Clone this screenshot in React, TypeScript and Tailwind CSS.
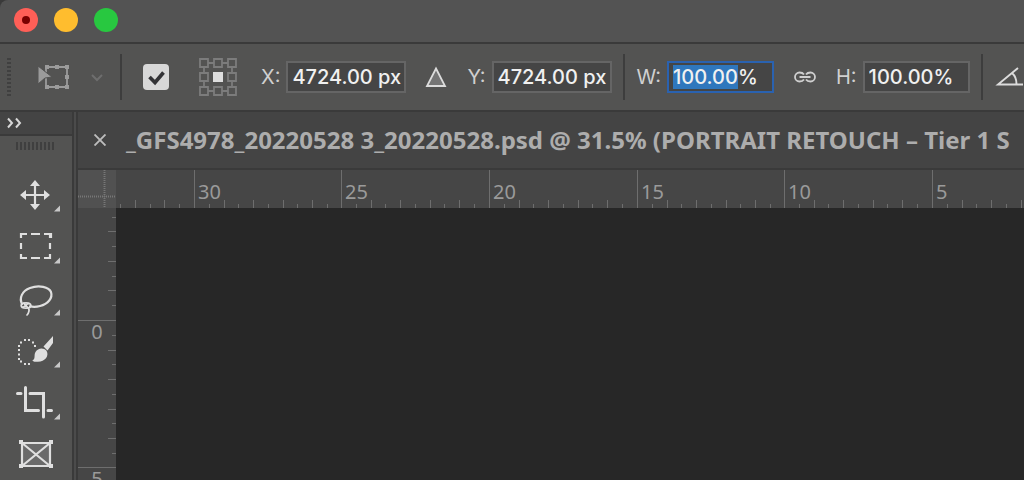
import { useEffect, useRef, type ReactNode } from "react";

const columns = [
  { label: "30", width: 147 },
  { label: "25", width: 148 },
  { label: "20", width: 148 },
  { label: "15", width: 147 },
  { label: "10", width: 148 },
  { label: "5", width: 148 },
];

const minorTicks = [1, 2, 3, 4, 5, 6, 7, 8, 9];
const TICK = 14.76;

const tools: { name: string; menu: boolean; icon: ReactNode }[] = [
  {
    name: "Move",
    menu: true,
    icon: (
      <>
        <path d="M35 14v24M23 26h24" stroke="currentColor" strokeWidth="2.200" />
        <path
          d="M35 11l5 6h-10zM35 41l5-6h-10zM20 26l6-5v10zM50 26l-6-5v10z"
          fill="currentColor"
        />
      </>
    ),
  },
  {
    name: "Marquee",
    menu: true,
    icon: (
      <path
        d="M21 17v-4h6M31 13h9M44 13h7v4M50 13v4M50 22v6M50 33v5M51 37h-7M40 37h-9M27 37h-6v-4M21 28v-6"
        fill="none"
        stroke="currentColor"
        strokeWidth="2.200"
      />
    ),
  },
  {
    name: "Lasso",
    menu: true,
    icon: (
      <g fill="none" stroke="currentColor" strokeWidth="2.200" strokeLinecap="round">
        <path d="M22 31c-3-6 0-13 8-16 9-3.500 19-1 21 4 2 6-3 12-11 14-3.500 1-7 1-10 .4" />
        <ellipse cx="26" cy="32.500" rx="4.800" ry="2.700" strokeWidth="1.800" />
        <path d="M24 30c1 4 6 4 5 8-.3 1.500-1 3-2 4M23 34c2 0 3-3 6-3.500" strokeWidth="1.700" />
      </g>
    ),
  },
  {
    name: "Quick Selection",
    menu: true,
    icon: (
      <>
        <path
          d="M18 20h2v2h-2zM18 24h2v2h-2zM18 28.500h2v2h-2zM18 33h2v2h-2zM20 16.500h2v2h-2zM24 14h2v2h-2zM28 14h2v2h-2zM32 16.500h2v2h-2zM34 20h2v2h-2zM20 35.500h2v2h-2zM24 38h2v2h-2zM28 38h2v2h-2z"
          fill="currentColor"
        />
        <path
          d="M53 11v7L47.500 25.500 43.500 21.500zM32.300 35.400C36 34 33.500 30.500 35.500 27c2.200-4 8-5 11-1.200 3 5-1.500 11-8.500 11-2 .2-4 0-5.700-1.400z"
          fill="currentColor"
        />
      </>
    ),
  },
  {
    name: "Crop",
    menu: true,
    icon: (
      <path
        d="M25.500 10.500v23h13M48 33.500h3.500M17.500 16.500h3.500M30 16.500h13.500V40"
        fill="none"
        stroke="currentColor"
        strokeWidth="3"
        strokeLinecap="round"
      />
    ),
  },
  {
    name: "Frame",
    menu: false,
    icon: (
      <>
        <path
          d="M22 14h28v23H22zM22 14l28 23M50 14L22 37"
          fill="#6a6a6a"
          stroke="currentColor"
          strokeWidth="2.200"
        />
        <path d="M19 11h4v4h-4zM49 11h4v4h-4zM19 35h4v4h-4zM49 35h4v4h-4z" fill="currentColor" />
      </>
    ),
  },
];

function Divider() {
  return <div className="h-[46px] w-0.5 shrink-0 bg-[#3d3d3d]" />;
}

function Field({ id, label, value, wide }: { id: string; label: string; value: string; wide?: boolean }) {
  return (
    <div className="flex shrink-0 items-center gap-1.5">
      <label htmlFor={id} className="text-[20px] text-[#d0d0d0]">
        {label}
      </label>
      <input
        id={id}
        defaultValue={value}
        className={
          "h-8 border-2 border-[#656565] bg-[#454545] pl-1 text-[20px] font-medium text-[#f0f0f0] outline-none " +
          (wide ? "w-[120px]" : "w-[107px]")
        }
      />
    </div>
  );
}

function OptionsBar() {
  const widthRef = useRef<HTMLInputElement>(null);

  useEffect(() => {
    widthRef.current?.focus();
    widthRef.current?.setSelectionRange(0, 6);
  }, []);

  return (
    <div className="flex h-[68px] items-center overflow-hidden border-b-2 border-[#3a3a3a] bg-[#535352] pl-[7px]">
      <svg width="4" height="38" className="shrink-0">
        <path d="M2 0v38" stroke="#404040" strokeWidth="4" strokeDasharray="2 2" />
      </svg>

      <button aria-label="Transform" className="ml-[27px] flex shrink-0 items-center gap-5 text-[#9b9b9b]">
        <svg width="32" height="26" viewBox="0 0 32 26">
          <path d="M8 3h21v20H8z" fill="none" stroke="currentColor" strokeWidth="1.800" />
          <path
            d="M7 1h4v4H7zM17 1h4v4h-4zM27 1h4v4h-4zM27 11h4v4h-4zM27 21h4v4h-4zM17 21h4v4h-4zM7 21h4v4H7z"
            fill="currentColor"
          />
          <path d="M0 2l14 11-7 1-7 6z" fill="currentColor" stroke="#535352" strokeWidth="1" />
        </svg>
        <svg width="14" height="10" viewBox="0 0 14 10">
          <path d="M2 3l5 5 5-5" fill="none" stroke="#6e6e6e" strokeWidth="2" />
        </svg>
      </button>

      <div className="ml-4 mr-[21px]">
        <Divider />
      </div>

      <div className="relative size-[26px] shrink-0">
        <input
          type="checkbox"
          defaultChecked
          aria-label="Toggle reference point"
          className="block size-[26px] appearance-none rounded bg-[#d8d8d8]"
        />
        <svg width="26" height="26" className="pointer-events-none absolute inset-0">
          <path d="M6.500 13l5.500 5.500 8.500-10" fill="none" stroke="#333336" strokeWidth="3.600" />
        </svg>
      </div>

      <svg width="38" height="38" className="ml-[30px] shrink-0" aria-label="Reference point">
        <g fill="none" stroke="#7c7c7c" strokeWidth="1.800">
          <path d="M1 1h8v8H1zM15 1h8v8h-8zM29 1h8v8h-8zM1 15h8v8H1zM29 15h8v8h-8zM1 29h8v8H1zM15 29h8v8h-8zM29 29h8v8h-8z" />
          <path d="M9 5h6M23 5h6M9 33h6M23 33h6M5 9v6M5 23v6M33 9v6M33 23v6" />
        </g>
        <path d="M14 14h10v10H14z" fill="#dedede" />
      </svg>

      <div className="ml-6 flex shrink-0 items-center gap-[19px]">
        <Field id="x" label="X:" value="4724.00 px" wide />
        <button aria-label="Relative positioning">
          <svg width="23" height="22" viewBox="0 0 23 22" className="block">
            <path d="M11 2.500L20 20H2z" fill="#757575" stroke="#dcdcdc" strokeWidth="1.800" />
          </svg>
        </button>
        <Field id="y" label="Y:" value="4724.00 px" wide />
      </div>

      <div className="ml-[11px] mr-3">
        <Divider />
      </div>

      <div className="flex shrink-0 items-center gap-[19px]">
        <div className="flex shrink-0 items-center gap-1.5">
          <label htmlFor="w" className="text-[20px] text-[#d0d0d0]">
            W:
          </label>
          <input
            id="w"
            ref={widthRef}
            defaultValue="100.00%"
            className="h-8 w-[107px] border-2 border-[#2a62b0] bg-[#454545] pl-1 text-[20px] leading-[26px] font-medium text-[#f0f0f0] outline-none selection:bg-[#2f77bd] selection:text-[#f0f0f0]"
          />
        </div>
        <button aria-label="Link width and height">
          <svg width="24" height="14" viewBox="0 0 24 14" className="block">
            <path
              d="M11 4.500C10 3 8.500 2.500 6.500 2.500a4.500 4.500 0 0 0 0 9c2 0 3.500-.5 4.500-2M13 4.500c1-1.500 2.500-2 4.500-2a4.500 4.500 0 0 1 0 9c-2 0-3.500-.5-4.500-2M6.500 7h11"
              fill="none"
              stroke="#cfcfcf"
              strokeWidth="1.800"
            />
          </svg>
        </button>
        <Field id="h" label="H:" value="100.00%" />
      </div>

      <div className="ml-[11px] mr-3">
        <Divider />
      </div>

      <svg width="28" height="22" viewBox="0 0 28 22" className="shrink-0" aria-label="Angle">
        <path d="M23 2L3 18.500h25M17 7c3.500 3 4.500 7 4.500 11" fill="none" stroke="#dcdcdc" strokeWidth="1.900" />
      </svg>
    </div>
  );
}

function ToolPanel() {
  return (
    <aside className="w-[74px] shrink-0 border-r-2 border-[#3a3a3a] bg-[#535352]">
      <button
        aria-label="Expand panel"
        className="flex h-6 w-full items-center border-b-2 border-[#3a3a3a] bg-[#444444] pl-[7px]"
      >
        <svg width="15" height="12" viewBox="0 0 15 12">
          <path d="M1 1.500L5 6l-4 4.500M9 1.500L13 6l-4 4.500" fill="none" stroke="#d8d8d8" strokeWidth="2" />
        </svg>
      </button>
      <div className="flex h-[33px] items-start justify-center pt-1.5">
        <svg width="40" height="8">
          <path d="M0 4h38" stroke="#3f3f3f" strokeWidth="8" strokeDasharray="2 2" />
        </svg>
      </div>
      {tools.map((tool) => (
        <button key={tool.name} aria-label={tool.name} className="block h-[52px] w-full text-[#dfdfdf]">
          <svg width="72" height="52" viewBox="0 0 72 52" className="block">
            {tool.icon}
            {tool.menu && <path d="M60 36.500v6h-6z" fill="#c8c8c8" />}
          </svg>
        </button>
      ))}
    </aside>
  );
}

function TopRuler() {
  return (
    <div className="flex h-[38px] min-w-0 flex-1 overflow-hidden bg-[#464646] text-[#9a9a9a]">
      <svg width="78" height="38" className="shrink-0">
        {[1, 2, 3, 4, 5].map((n) => (
          <path key={n} d={`M${Math.round(78 - n * TICK) + 0.5} 38v${n % 2 ? -4 : -8}`} stroke="#6e6e6e" />
        ))}
      </svg>
      {columns.map((col) => (
        <div key={col.label} className="relative shrink-0 border-l border-[#6e6e6e]" style={{ width: col.width }}>
          <span className="block pl-[3px] pt-2 font-['Noto_Sans'] text-[20px] leading-7">{col.label}</span>
          <svg width="146" height="8" className="absolute bottom-0 left-0">
            {minorTicks.map((n) => (
              <path key={n} d={`M${Math.round(n * TICK) - 0.5} 8v${n % 2 ? -4 : -8}`} stroke="#6e6e6e" />
            ))}
          </svg>
        </div>
      ))}
    </div>
  );
}

function SideRuler() {
  return (
    <div className="w-[38px] shrink-0 overflow-hidden bg-[#464646] text-[#9a9a9a]">
      <svg width="38" height="112" className="block">
        {[1, 2, 3, 4, 5, 6, 7].map((n) => (
          <path key={n} d={`M38 ${Math.round(112 - n * TICK) + 0.5}h${n % 2 ? -4 : -8}`} stroke="#6e6e6e" />
        ))}
      </svg>
      {["0", "5"].map((label) => (
        <div key={label} className="relative h-[147px] border-t border-[#6e6e6e]">
          <span className="block text-center font-['Noto_Sans'] text-[20px] leading-[22px]">{label}</span>
          <svg width="8" height="146" className="absolute right-0 top-0">
            {minorTicks.map((n) => (
              <path key={n} d={`M8 ${Math.round(n * TICK) - 0.5}h${n % 2 ? -4 : -8}`} stroke="#6e6e6e" />
            ))}
          </svg>
        </div>
      ))}
    </div>
  );
}

export default function App() {
  return (
    <div className="flex h-screen flex-col overflow-hidden bg-[#3a3a3a] font-['Inter',sans-serif]">
      <header className="flex h-11 shrink-0 items-center gap-4 rounded-tl-lg border-b-2 border-[#3a3a3a] bg-[#535353] pb-0.5 pl-3.5">
        <button aria-label="Close" className="flex size-6 items-center justify-center rounded-full bg-[#ff5f57]">
          <span className="size-2 rounded-full bg-[#7a0000]" />
        </button>
        <button aria-label="Minimize" className="size-6 rounded-full bg-[#ffbd2e]" />
        <button aria-label="Zoom" className="size-6 rounded-full bg-[#28c840]" />
      </header>

      <OptionsBar />

      <div className="flex min-h-0 flex-1 gap-0.5 bg-[#4b4b4b]">
        <ToolPanel />
        <main className="flex min-w-0 flex-1 flex-col border-l-2 border-[#3a3a3a]">
          <div className="flex h-[58px] shrink-0 items-center gap-5 overflow-hidden border-b-2 border-[#3a3a3a] bg-[#444444] pl-4">
            <button aria-label="Close document" className="shrink-0">
              <svg width="12" height="12" viewBox="0 0 12 12" className="block">
                <path d="M.5.5l11 11M11.500.5L.5 11.500" stroke="#bdbdbd" strokeWidth="1.900" />
              </svg>
            </button>
            <h1 className="whitespace-nowrap font-['Noto_Sans'] text-[24px] leading-8 font-bold text-[#adadad]">
              _GFS4978_20220528 3_20220528.psd @ 31.5% (PORTRAIT RETOUCH – Tier 1 S
            </h1>
          </div>
          <div className="flex shrink-0">
            <svg width="38" height="38" className="shrink-0 bg-[#515151]">
              <path d="M26.500 0v38M0 26.500h38" stroke="#777777" strokeWidth="2" strokeDasharray="1 1" />
            </svg>
            <TopRuler />
          </div>
          <div className="flex min-h-0 flex-1">
            <SideRuler />
            <div className="flex-1 bg-[#272727]" />
          </div>
        </main>
      </div>
    </div>
  );
}
